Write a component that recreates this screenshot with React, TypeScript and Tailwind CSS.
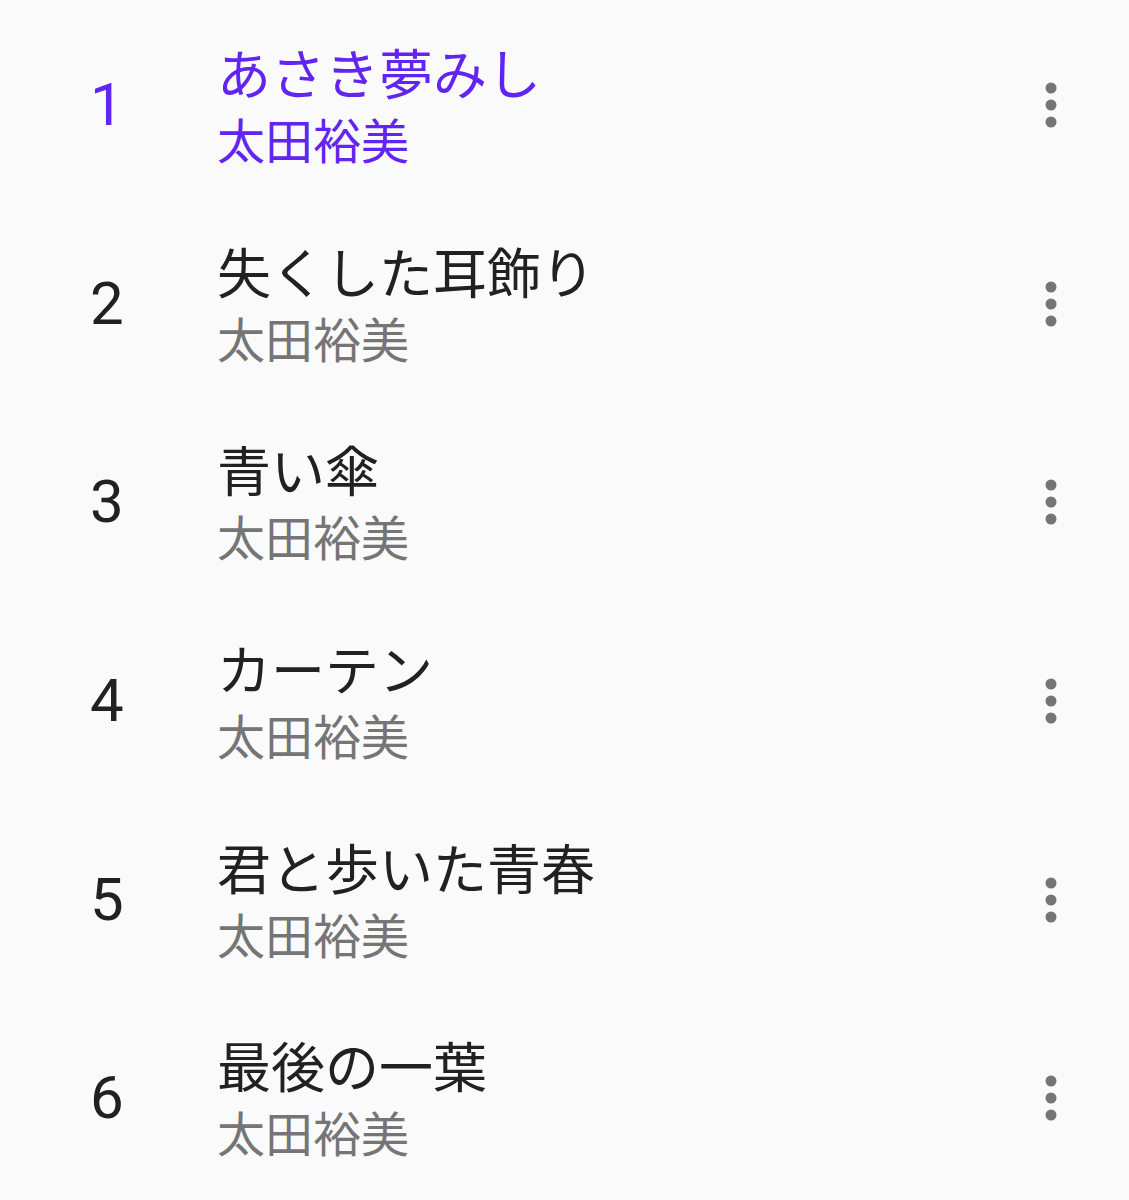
import React from "react";

const songs = [
  "あさき夢みし",
  "失くした耳飾り",
  "青い傘",
  "カーテン",
  "君と歩いた青春",
  "最後の一葉",
];

function Dots() {
  return (
    <svg width="12" height="46" viewBox="0 0 12 46" className="block">
      <circle cx="6" cy="6" r="5.5" fill="#757575" />
      <circle cx="6" cy="23" r="5.5" fill="#757575" />
      <circle cx="6" cy="40" r="5.5" fill="#757575" />
    </svg>
  );
}

export default function App() {
  return (
    <div
      className="w-[1129px] h-[1200px] bg-[#fafafa] pt-[6px] overflow-hidden"
      style={{ fontFamily: "Roboto, 'Noto Sans CJK JP', sans-serif" }}
    >
      {songs.map((title, i) => {
        const active = i === 0;
        return (
          <div key={i} className="h-[198.6px] flex items-center">
            <div
              className={`w-[217px] pl-[90px] text-[60px] leading-none ${
                active ? "text-[#6224f0]" : "text-[#212121]"
              }`}
            >
              {i + 1}
            </div>
            <div className="flex-1 flex flex-col">
              <div
                className={`text-[54px] leading-[66px] ${
                  active ? "text-[#6224f0]" : "text-[#212121]"
                }`}
                style={{ fontFamily: "'Noto Sans CJK JP', sans-serif" }}
              >
                {title}
              </div>
              <div
                className={`text-[48px] leading-[66px] ${
                  active ? "text-[#6224f0]" : "text-[#757575]"
                }`}
                style={{ fontFamily: "'Noto Sans CJK JP', sans-serif" }}
              >
                太田裕美
              </div>
            </div>
            <div className="w-[90px] flex justify-start pl-[6px]">
              <Dots />
            </div>
          </div>
        );
      })}
    </div>
  );
}
